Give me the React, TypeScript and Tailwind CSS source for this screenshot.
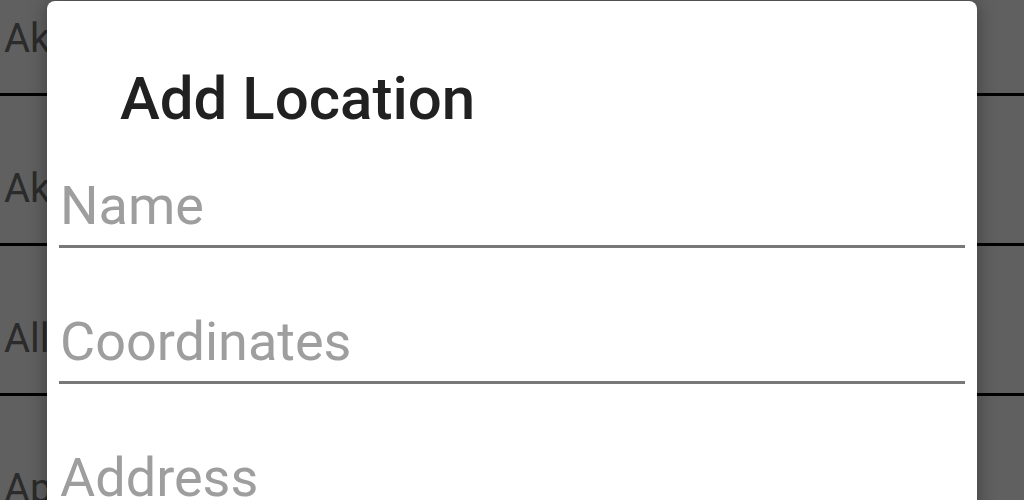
import React from "react";

const rows = ["Ak", "Ak", "All", "Ap"];

export default function App() {
  return (
    <div
      className="relative w-[1024px] h-[500px] overflow-hidden bg-[#606060]"
      style={{ fontFamily: "Roboto, 'Noto Sans', sans-serif" }}
    >
      <div className="-mt-[54px] flex flex-col">
        {rows.map((r, i) => (
          <div key={i} className="h-[150px] border-b-[3px] border-black pl-[4px] pt-[69px]">
            <div className="text-[40px] leading-[47px] text-[#2b2b2b]">{r}</div>
          </div>
        ))}
      </div>

      <div className="absolute left-[47px] top-[1px] w-[930px] h-[560px] rounded-t-[8px] bg-white shadow-[0_0_20px_rgba(0,0,0,0.35)]">
        <div className="pl-[73px] pt-[63px] text-[60px] leading-[70px] font-medium text-[#212121]">
          Add Location
        </div>
        <div className="mt-[32px] flex flex-col gap-[54px] pl-[12px] pr-[12px]">
          {["Name", "Coordinates", "Address"].map((p) => (
            <input
              key={p}
              placeholder={p}
              className="block w-full h-[82px] pl-[1px] text-[54px] text-[#212121] placeholder:text-[#9e9e9e] border-b-[3px] border-[#787878] outline-none bg-transparent"
              style={{ fontFamily: "Roboto, 'Noto Sans', sans-serif" }}
            />
          ))}
        </div>
      </div>
    </div>
  );
}
